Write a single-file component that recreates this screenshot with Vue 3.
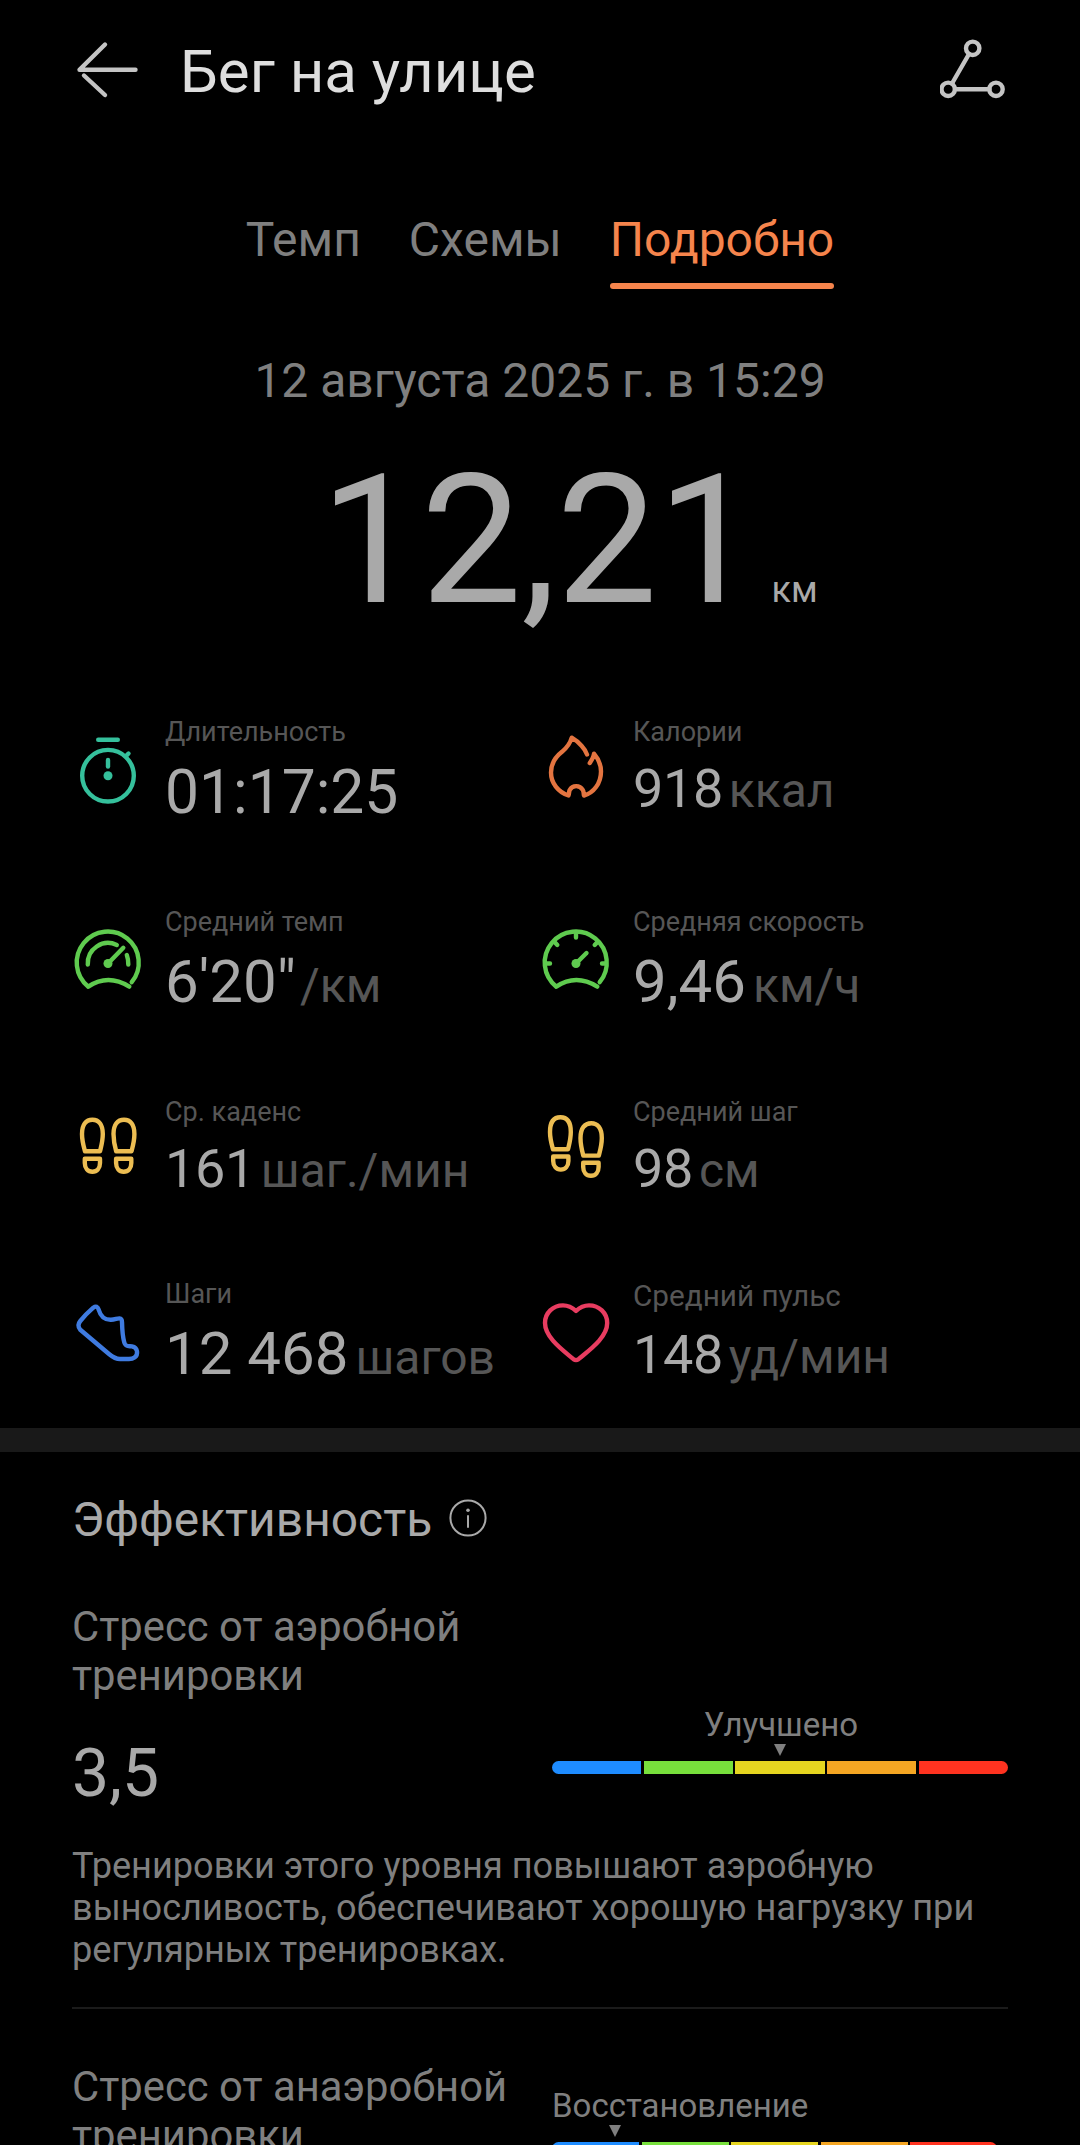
<template>
  <div class="page">
    <header class="topbar">
      <svg class="back" viewBox="0 0 66 66">
        <path d="M61.5 30.8H5.5L31 5.5M10 36.5L31 56" />
      </svg>
      <h1>Бег на улице</h1>
      <svg class="share" viewBox="0 0 72 72">
        <path d="M29 18L12 47.5M15 53.3H49.5" />
        <circle cx="32.7" cy="12.3" r="6.7" />
        <circle cx="8.2" cy="53.3" r="6.7" />
        <circle cx="56" cy="53.3" r="6.7" />
      </svg>
    </header>

    <nav class="tabs">
      <button
        v-for="tab in tabs"
        :key="tab"
        :class="{ active: tab === activeTab }"
        @click="activeTab = tab"
      >
        {{ tab }}
      </button>
    </nav>

    <p class="date">12 августа 2025 г. в 15:29</p>

    <div class="distance">
      <span class="num">12,21</span>
      <span class="km">км</span>
    </div>

    <section class="stats">
      <div v-for="s in stats" :key="s.label" class="stat" :class="s.size">
        <svg class="icon" :class="s.color" viewBox="0 0 72 72">
          <path v-for="d in s.paths" :key="d" :d="d" />
          <circle v-if="s.dot" class="dot" cx="36" :cy="s.dot" r="4.5" />
        </svg>
        <div class="info">
          <p class="label">{{ s.label }}</p>
          <p class="value">
            {{ s.value }}<span v-if="s.unit" class="unit">{{ s.unit }}</span>
          </p>
        </div>
      </div>
    </section>

    <div class="band"></div>

    <section class="effect">
      <h2>
        Эффективность
        <svg class="info-icon" viewBox="0 0 40 40">
          <circle cx="20" cy="20" r="17.6" />
          <path d="M20 18V29" />
          <circle class="dot" cx="20" cy="12.2" r="1.8" />
        </svg>
      </h2>

      <article v-for="e in effects" :key="e.title" class="effect-item" :class="e.kind">
        <div class="left">
          <p class="title">{{ e.title }}</p>
          <p class="score">{{ e.score }}</p>
        </div>
        <div class="scale">
          <p class="level">{{ e.level }}</p>
          <svg class="marker" viewBox="0 0 12 12"><path d="M0 0H12L6 12Z" /></svg>
          <div class="bar">
            <i v-for="c in colors" :key="c" :class="c"></i>
          </div>
        </div>
        <p v-if="e.text" class="text">{{ e.text }}</p>
      </article>
    </section>
  </div>
</template>

<script setup>
import { ref } from "vue";

const tabs = ["Темп", "Схемы", "Подробно"];
const activeTab = ref("Подробно");

const colors = ["blue", "green", "yellow", "orange", "red"];

// корпус спидометра, общий для темпа и скорости
const gauge = "M59.7 58.2A31 31 0 1 0 16.3 62.7Q36 49.5 57.3 62.7";

const stats = [
  {
    label: "Длительность",
    value: "01:17:25",
    color: "teal",
    size: "big time",
    dot: 41.7,
    paths: [
      "M36 15.9A25.8 25.8 0 1 1 36 67.5A25.8 25.8 0 1 1 36 15.9Z",
      "M26.2 5.7H45.8",
      "M54 22L56.5 19.5",
      "M36 26V32.5",
    ],
  },
  {
    label: "Калории",
    value: "918",
    unit: "ккал",
    color: "coral",
    size: "small",
    paths: [
      "M49.8 29C51.5 26.5 53.5 23.5 54 19.8C58.5 25 61 31 61 37.5C61 49.5 53.5 59 44 61.5C43.5 59 43.8 57.5 42.8 56C39.8 50.8 32.5 50.8 29.7 56C29 57.5 29.2 59 28.5 61.5C18 58 11 49 11 38.5C11 28 16 22.5 22 17.8C27 13.5 30 10 31.7 3.7C39 8 45.5 15 47 20.5",
    ],
  },
  {
    label: "Средний темп",
    value: "6'20\"",
    unit: "/км",
    color: "green",
    size: "big pace",
    dot: 39.5,
    paths: [
      gauge,
      "M15.8 40.5A20.3 20.3 0 0 1 44.8 21",
      "M54.8 31Q56.3 35 56.3 40.5",
      "M36 39.5L51.3 23.8",
    ],
  },
  {
    label: "Средняя скорость",
    value: "9,46",
    unit: "км/ч",
    color: "green",
    size: "big",
    dot: 39.5,
    paths: [
      gauge,
      "M36 10V13.5M6 39.5H10M62 39.5H66M14.5 18L17.3 21M57.5 18L54.7 21",
      "M36 39.5L46.5 29",
    ],
  },
  {
    label: "Ср. каденс",
    value: "161",
    unit: "шаг./мин",
    color: "gold",
    size: "small",
    paths: [
      "M13 37.3C11.5 32 10 27 10 20C10 10.5 14 5.7 20.4 5.7S30.8 10.5 30.8 20C30.8 27 29.3 32 28 37.3Z",
      "M12.8 44.7H28V49C28 54 25 57.7 20.4 57.7S12.8 54 12.8 49Z",
      "M44.2 37.3C42.7 32 41.5 27 41.5 20C41.5 10.5 45.6 5.7 52 5.7S62.4 10.5 62.4 20C62.4 27 60.9 32 59.5 37.3Z",
      "M44.1 44.7H59.3V49C59.3 54 56.3 57.7 51.7 57.7S44.1 54 44.1 49Z",
    ],
  },
  {
    label: "Средний шаг",
    value: "98",
    unit: "см",
    color: "gold",
    size: "small",
    paths: [
      "M13 35.3C11.5 30 10 25 10 18C10 8 14 3.2 20.4 3.2S30.8 8 30.8 18C30.8 25 29.3 30 28 35.3Z",
      "M13.2 42.5H28.4V47C28.4 52 25.4 55.6 20.8 55.6S13.2 52 13.2 47Z",
      "M43.3 41.6C41.8 36 40.5 31 40.5 24C40.5 14 44.8 9.2 51.2 9.2S61.8 14 61.8 24C61.8 31 60.3 36 58.8 41.6Z",
      "M43.2 48.7H58.6V53C58.6 58 55.6 61.8 50.9 61.8S43.2 58 43.2 53Z",
    ],
  },
  {
    label: "Шаги",
    value: "12 468",
    unit: "шагов",
    color: "blue",
    size: "big",
    paths: [
      "M21.3 11.7Q25.2 8.8 26.8 14C28.5 20 32.5 24 39 23.8C43 23.7 45 22.3 47.5 22.4Q50 22.6 50 26C50.2 34 50.4 40 52.3 46.5C53.5 51 56.5 50 60 50.4C66 51.5 66.5 58.5 62.5 61.5Q60.5 63 57 63H48C43 63 40 60.5 37 58L8.3 33.8Q4.6 29.5 8.3 25Q14 18 21.3 11.7Z",
    ],
  },
  {
    label: "Средний пульс",
    value: "148",
    unit: "уд/мин",
    color: "pink",
    size: "small pulse",
    paths: [
      "M36 15C31.5 10.8 27.5 9.4 23 9.4C13 9.4 5 17 5 27C5 42 24 55 33.5 63.2Q36 65 38.5 63.2C48 55 67.2 42 67.2 27C67.2 17 59 9.4 49 9.4C44.5 9.4 40.5 10.8 36 15Z",
    ],
  },
];

const effects = [
  {
    kind: "aerobic",
    title: "Стресс от аэробной тренировки",
    score: "3,5",
    level: "Улучшено",
    text: "Тренировки этого уровня повышают аэробную выносливость, обеспечивают хорошую нагрузку при регулярных тренировках.",
  },
  {
    kind: "anaerobic",
    title: "Стресс от анаэробной тренировки",
    score: "",
    level: "Восстановление",
  },
];
</script>

<style>
body {
  margin: 0;
  background: #000;
}
</style>

<style scoped>
.page {
  width: 1080px;
  height: 2145px;
  overflow: hidden;
  background: #000;
  color: #a9a9a9;
  font-family: Roboto, "Liberation Sans", sans-serif;
}

p,
h1,
h2 {
  margin: 0;
  font-weight: 400;
}

svg {
  fill: none;
  stroke: currentColor;
  stroke-width: 4.4;
  stroke-linecap: round;
  stroke-linejoin: round;
}

/* header */
.topbar {
  display: flex;
  align-items: center;
  height: 144px;
  padding: 0 68px 0 74px;
  box-sizing: border-box;
  color: #c4c4c4;
}

.back {
  width: 66px;
  height: 66px;
}

.share {
  width: 72px;
  height: 72px;
}

h1 {
  flex: 1;
  margin-left: 40px;
  font-size: 60px;
  line-height: 72px;
  color: #dedede;
}

/* tabs */
.tabs {
  display: flex;
  justify-content: center;
  align-items: flex-start;
  gap: 48px;
  height: 146px;
  padding-top: 68px;
  box-sizing: border-box;
}

.tabs button {
  padding: 0;
  border: none;
  background: none;
  font: inherit;
  font-size: 48px;
  line-height: 56px;
  color: #7f7f7f;
}

.tabs .active {
  color: #f5844c;
}

.tabs .active::after {
  content: "";
  display: block;
  height: 6px;
  margin-top: 15px;
  border-radius: 3px;
  background: #f5844c;
}

.date {
  margin-top: 62px;
  text-align: center;
  font-size: 48px;
  line-height: 58px;
  color: #7f7f7f;
}

/* distance */
.distance {
  display: flex;
  align-items: baseline;
  height: 305px;
  padding-left: 320px;
  line-height: 262px;
}

.num {
  font-size: 180px;
  letter-spacing: -0.5px;
}

.km {
  margin-left: 14px;
  font-size: 36px;
}

/* stats */
.stats {
  display: grid;
  grid-template-columns: 468px 1fr;
  grid-template-rows: 190px 190px 182px 151px;
  padding-left: 72px;
}

.stat {
  display: flex;
  align-items: flex-start;
}

.icon {
  width: 72px;
  height: 72px;
  margin: 19px 21px 0 0;
}

.dot {
  fill: currentColor;
  stroke: none;
}

.label {
  padding-top: 1px;
  margin-bottom: 8px;
  font-size: 27px;
  line-height: 32px;
  color: #565656;
}

.value {
  font-size: 60px;
  line-height: 72px;
  white-space: nowrap;
}

.time .value {
  padding-top: 1px;
  font-size: 60.5px;
}

.small .value {
  font-size: 54px;
  line-height: 65px;
  letter-spacing: -0.4px;
}

.unit {
  margin-left: 7px;
  font-size: 48px;
  letter-spacing: 0;
  color: #565656;
}

.small .unit {
  margin-left: 6px;
}

.pace .unit {
  margin-left: 4px;
}

.pulse .label {
  padding-top: 3px;
  font-size: 29.7px;
}

.pulse .value {
  padding-top: 2px;
}

.teal {
  color: #35c09c;
}
.coral {
  color: #e37440;
}
.green {
  color: #5fcb4f;
}
.gold {
  color: #ecbd52;
}
.blue {
  color: #3f7be0;
}
.pink {
  color: #e83c60;
}

.band {
  height: 24px;
  background: #191919;
}

/* effectiveness */
.effect {
  padding: 0 72px;
}

h2 {
  display: flex;
  align-items: center;
  gap: 16px;
  padding-top: 40px;
  font-size: 47.9px;
  line-height: 56px;
}

.info-icon {
  width: 40px;
  height: 40px;
  margin-bottom: 4px;
  stroke-width: 2;
}

.effect-item {
  display: grid;
  grid-template-columns: 480px 456px;
  color: #7f7f7f;
}

.title {
  font-size: 41.8px;
  line-height: 49px;
}

.score {
  font-size: 66px;
  line-height: 80px;
  color: #a9a9a9;
}

.aerobic {
  height: 405px;
  margin-top: 54px;
  align-content: start;
  border-bottom: 2px solid #1b1b1b;
}

.aerobic .title {
  width: 420px;
}

.aerobic .score {
  margin-top: 34px;
}

.anaerobic {
  margin-top: 53px;
}

.scale {
  display: flex;
  flex-direction: column;
  align-items: center;
}

.aerobic .scale {
  padding-top: 103px;
}

.anaerobic .scale {
  align-items: flex-start;
  padding-top: 24px;
}

.level {
  font-size: 33px;
  line-height: 40px;
}

.aerobic .level {
  padding-left: 2px;
}

.marker {
  width: 12px;
  height: 12px;
  margin-top: -1px;
  fill: currentColor;
  stroke: none;
}

.anaerobic .marker {
  margin-left: 57px;
}

.bar {
  display: flex;
  gap: 2.5px;
  width: 100%;
  height: 13px;
  margin-top: 5px;
  border-radius: 7px;
  overflow: hidden;
}

.anaerobic .bar {
  width: 445px;
}

.bar i {
  flex: 1;
}

.bar .blue {
  background: #1e8cff;
}
.bar .green {
  background: #78e03c;
}
.bar .yellow {
  background: #e6d520;
}
.bar .orange {
  background: #f5a623;
}
.bar .red {
  background: #ff3320;
}

.text {
  grid-column: 1 / -1;
  margin-top: 31px;
  font-size: 36.15px;
  line-height: 42px;
}
</style>
